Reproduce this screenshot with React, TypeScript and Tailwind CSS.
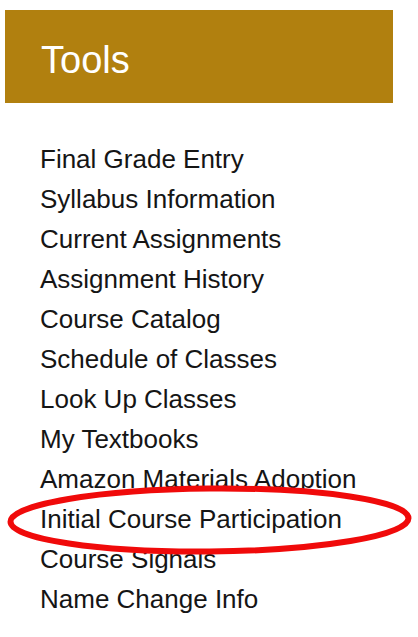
const tools = [
  'Final Grade Entry',
  'Syllabus Information',
  'Current Assignments',
  'Assignment History',
  'Course Catalog',
  'Schedule of Classes',
  'Look Up Classes',
  'My Textbooks',
  'Amazon Materials Adoption',
  'Initial Course Participation',
  'Course Signals',
  'Name Change Info',
];

export default function App() {
  return (
    <div
      className="relative h-[637px] w-[418px] overflow-hidden bg-white pt-[10px]"
      style={{ fontFamily: '"Liberation Sans", Arial, sans-serif' }}
    >
      {/* Header */}
      <div className="ml-[5px] flex h-[93px] w-[388px] items-center bg-[#b1800f] pt-[6px] pl-[36px]">
        <h2 className="text-[38px] leading-none text-white">Tools</h2>
      </div>

      {/* Links */}
      <ul className="mt-[36px] pl-[40px]">
        {tools.map((t) => (
          <li key={t} className="text-[26px] leading-[40px] text-[#151515]">
            {t}
          </li>
        ))}
      </ul>

      {/* Red highlight ellipse */}
      <svg
        className="pointer-events-none absolute top-0 left-0"
        width="418"
        height="637"
        viewBox="0 0 418 637"
      >
        <ellipse
          cx="209.5"
          cy="520"
          rx="199"
          ry="31.5"
          fill="none"
          stroke="#f00a0a"
          strokeWidth="6"
          transform="rotate(-0.5 209.5 520)"
        />
      </svg>
    </div>
  );
}
